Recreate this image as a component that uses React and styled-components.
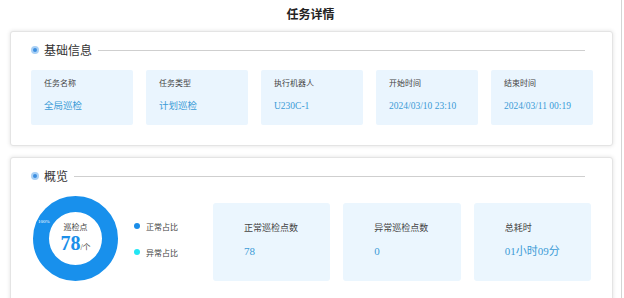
import React from 'react';
import styled, { createGlobalStyle } from 'styled-components';

const GlobalStyle = createGlobalStyle`
  body {
    margin: 0;
    background: #fff;
    font-family: "Liberation Serif", "Noto Sans CJK SC", serif;
    color: #333;
  }
`;

const Page = styled.div`
  width: 621px;
  height: 298px;
  overflow: hidden;
  border-right: 1px solid #d4d4d4;
  box-sizing: content-box;
`;

const Title = styled.h1`
  margin: 0;
  height: 31px;
  line-height: 31px;
  text-align: center;
  font-size: 12px;
  font-weight: bold;
  color: #222;
`;

const Card = styled.section`
  margin: 0 0 11px 10px;
  width: 603px;
  box-sizing: border-box;
  padding: 8px 21px 20px 20px;
  border: 1px solid #e4e4e4;
  border-radius: 3px;
  box-shadow: 0 0 4px rgba(0, 0, 0, 0.12);
  background: #fff;
`;

const Heading = styled.div`
  display: flex;
  align-items: center;
  height: 20px;
  font-size: 12px;
  color: #333;
`;

const HeadingLine = styled.span`
  flex: 1;
  height: 1px;
  margin: 0 6px 0 6px;
  background: #cfcfcf;
`;

const Dot = styled.span`
  width: 8px;
  height: 8px;
  margin-right: 5px;
  border-radius: 50%;
  box-sizing: border-box;
  border: 2px solid #a9d0f5;
  background: #3d8fe0;
`;

const InfoGrid = styled.div`
  display: grid;
  grid-template-columns: repeat(5, 102px);
  gap: 13px;
  margin-top: 10px;
`;

const InfoItem = styled.div`
  height: 55px;
  box-sizing: border-box;
  padding: 9px 13px 0;
  background: #eaf5fe;
  border-radius: 2px;
`;

const InfoLabel = styled.div`
  font-size: 8px;
  line-height: 10px;
  color: #444;
`;

const InfoValue = styled.div`
  margin-top: 11px;
  font-size: 9.5px;
  line-height: 12px;
  color: #3b9bd6;
  white-space: nowrap;
`;

const OverviewRow = styled.div`
  display: flex;
  align-items: flex-start;
  margin-top: 10px;
`;

const Donut = styled.div`
  display: grid;
  place-items: center;
  width: 85px;
  height: 85px;
  margin-left: 2px;
  > * {
    grid-area: 1 / 1;
  }
`;

const DonutCenter = styled.div`
  display: flex;
  flex-direction: column;
  align-items: center;
  margin-top: 4px;
`;

const DonutCaption = styled.div`
  font-size: 8px;
  line-height: 10px;
  color: #444;
`;

const DonutValue = styled.div`
  font-size: 20px;
  line-height: 20px;
  font-weight: bold;
  color: #1b8fe9;
  span {
    font-size: 8px;
    font-weight: normal;
    color: #444;
  }
`;

const Legend = styled.div`
  display: flex;
  flex-direction: column;
  gap: 14px;
  margin: 24px 0 0 16px;
  width: 79px;
`;

const LegendItem = styled.div`
  display: flex;
  align-items: center;
  height: 12px;
  font-size: 8px;
  color: #444;
`;

const LegendDot = styled.span`
  width: 6px;
  height: 6px;
  margin-right: 6px;
  border-radius: 50%;
  background: ${p => p.color};
`;

const StatGrid = styled.div`
  flex: 1;
  display: grid;
  grid-template-columns: repeat(3, 1fr);
  gap: 13px;
  margin-top: 7px;
`;

const StatItem = styled.div`
  height: 78px;
  box-sizing: border-box;
  padding: 19px 8px 0 31px;
  background: #ebf6fe;
  border-radius: 3px;
  white-space: nowrap;
`;

const StatLabel = styled.div`
  font-size: 9px;
  line-height: 12px;
  color: #444;
`;

const StatValue = styled.div`
  margin-top: 10px;
  font-size: 11px;
  line-height: 14px;
  color: #3b9bd6;
`;

const info = [
  ['任务名称', '全局巡检'],
  ['任务类型', '计划巡检'],
  ['执行机器人', 'U230C-1'],
  ['开始时间', '2024/03/10 23:10'],
  ['结束时间', '2024/03/11 00:19'],
];

const stats = [
  ['正常巡检点数', '78'],
  ['异常巡检点数', '0'],
  ['总耗时', '01小时09分'],
];

const SectionHeading = ({ children }) => (
  <Heading>
    <Dot />
    {children}
    <HeadingLine />
  </Heading>
);

export default function App() {
  return (
    <Page>
      <GlobalStyle />
      <Title>任务详情</Title>
      <Card>
        <SectionHeading>基础信息</SectionHeading>
        <InfoGrid>
          {info.map(([label, value]) => (
            <InfoItem key={label}>
              <InfoLabel>{label}</InfoLabel>
              <InfoValue>{value}</InfoValue>
            </InfoItem>
          ))}
        </InfoGrid>
      </Card>
      <Card>
        <SectionHeading>概览</SectionHeading>
        <OverviewRow>
          <Donut>
            <svg width="85" height="85" viewBox="0 0 85 85">
              <circle cx="42.5" cy="42.5" r="34.5" fill="none" stroke="#1890ec" strokeWidth="16" />
              <text x="5" y="27" fontSize="5" fill="#fff" fontFamily="Liberation Serif">100%</text>
            </svg>
            <DonutCenter>
              <DonutCaption>巡检点</DonutCaption>
              <DonutValue>
                78<span>/个</span>
              </DonutValue>
            </DonutCenter>
          </Donut>
          <Legend>
            <LegendItem>
              <LegendDot color="#1a8de8" />
              正常占比
            </LegendItem>
            <LegendItem>
              <LegendDot color="#22e6f4" />
              异常占比
            </LegendItem>
          </Legend>
          <StatGrid>
            {stats.map(([label, value]) => (
              <StatItem key={label}>
                <StatLabel>{label}</StatLabel>
                <StatValue>{value}</StatValue>
              </StatItem>
            ))}
          </StatGrid>
        </OverviewRow>
      </Card>
    </Page>
  );
}
